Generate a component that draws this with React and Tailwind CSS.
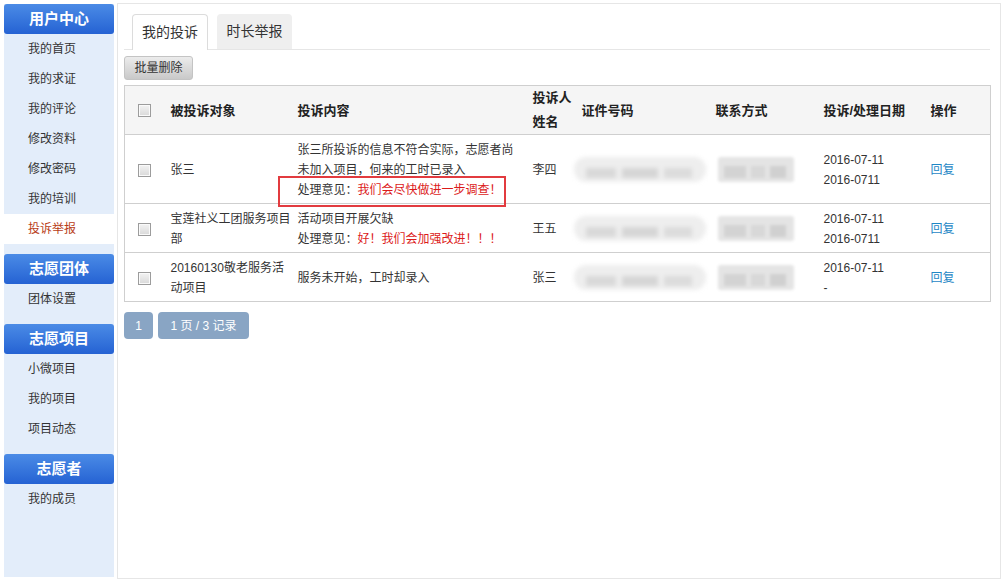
import React from 'react';

const menu = [
  { title: '用户中心', items: ['我的首页', '我的求证', '我的评论', '修改资料', '修改密码', '我的培训', '投诉举报'] },
  { title: '志愿团体', items: ['团体设置'] },
  { title: '志愿项目', items: ['小微项目', '我的项目', '项目动态'] },
  { title: '志愿者', items: ['我的成员'] },
];

const Check = () => (
  <span className="block h-[13px] w-[13px] border border-[#9c9c9c] bg-gradient-to-b from-[#f3f3f3] to-[#d9d9d9] shadow-[inset_0_0_0_1px_#fafafa]" />
);

// blurred-out personal info
const IdSmudge = () => (
  <div className="flex h-[25px] w-[132px] items-end gap-[6px] rounded-[12px] bg-[#eeeeee] px-[12px] pb-[4px] blur-[2px]">
    <span className="h-[10px] w-[30px] bg-[#d9d9d9]" />
    <span className="h-[10px] w-[36px] bg-[#d6d6d6]" />
    <span className="h-[10px] w-[28px] bg-[#dcdcdc]" />
  </div>
);

const PhoneSmudge = () => (
  <div className="flex h-[25px] w-[76px] items-end gap-[5px] rounded-[3px] bg-[#e4e4e4] px-[6px] pb-[4px] blur-[1.5px]">
    <span className="h-[12px] w-[22px] bg-[#d3d3d3]" />
    <span className="h-[12px] w-[14px] bg-[#d8d8d8]" />
    <span className="h-[12px] w-[16px] bg-[#d0d0d0]" />
  </div>
);

const rows = [
  {
    target: '张三',
    content: '张三所投诉的信息不符合实际，志愿者尚未加入项目，何来的工时已录入',
    reply: '我们会尽快做进一步调查！',
    boxed: true,
    name: '李四',
    dates: ['2016-07-11', '2016-0711'],
  },
  {
    target: '宝莲社义工团服务项目部',
    content: '活动项目开展欠缺',
    reply: '好！我们会加强改进！！！',
    name: '王五',
    dates: ['2016-07-11', '2016-0711'],
  },
  {
    target: '20160130敬老服务活动项目',
    content: '服务未开始，工时却录入',
    name: '张三',
    dates: ['2016-07-11', '-'],
  },
];

export default function App() {
  return (
    <div className="flex h-[582px] w-[1004px] gap-[3px] bg-white pl-[4px] pt-[3px] font-['Liberation_Sans','Noto_Sans_CJK_SC',sans-serif] text-[12px] text-[#333]">
      {/* Sidebar */}
      <div className="mt-[1px] flex h-[573px] w-[110px] flex-col bg-[#e3edfa]">
        {menu.map((group, gi) => (
          <div key={group.title} className={gi > 0 ? 'mt-[10px]' : ''}>
            <div className="flex h-[30px] items-center justify-center rounded-[3px] bg-gradient-to-b from-[#4b8be6] to-[#2562d3] text-[15px] font-bold text-white">
              {group.title}
            </div>
            {group.items.map(item => (
              <div
                key={item}
                className={`flex h-[30px] items-center pl-[24px] text-[12px] ${item === '投诉举报' ? 'bg-white text-[#b83c17]' : 'text-[#333]'}`}
              >
                {item}
              </div>
            ))}
          </div>
        ))}
      </div>

      {/* Main panel */}
      <div className="h-[576px] w-[884px] border border-[#e6e6e6] pl-[6px] pr-[10px] pt-[10px]">
        <div className="flex gap-[9px] border-b border-[#e6e6e6] pl-[8px]">
          <div className="-mb-px flex h-[36px] w-[76px] items-center justify-center rounded-t-[4px] border border-b-0 border-[#dcdcdc] bg-white text-[14px] text-[#333]">
            我的投诉
          </div>
          <div className="flex h-[35px] w-[75px] items-center justify-center rounded-t-[4px] bg-[#efefef] text-[14px] text-[#333]">
            时长举报
          </div>
        </div>

        <button className="mt-[6px] flex h-[24px] w-[69px] items-center justify-center rounded-[3px] border border-[#c4c4c4] bg-gradient-to-b from-[#ececec] to-[#c9c9c9] text-[12px] text-[#333]">
          批量删除
        </button>

        <table className="mt-[5px] w-[866px] table-fixed border-collapse border border-[#cfcfcf]">
          <colgroup>
            <col className="w-[42px]" />
            <col className="w-[127px]" />
            <col className="w-[235px]" />
            <col className="w-[49px]" />
            <col className="w-[134px]" />
            <col className="w-[108px]" />
            <col className="w-[107px]" />
            <col className="w-[64px]" />
          </colgroup>
          <thead>
            <tr className="bg-[#f5f5f5] text-left align-middle text-[13px] font-bold leading-[24px] text-[#222]">
              <th className="pl-[13px]"><Check /></th>
              <th className="pl-[4px] pt-[2px]">被投诉对象</th>
              <th className="pl-[4px] pt-[2px]">投诉内容</th>
              <th className="pl-[4px] pr-[4px]">投诉人姓名</th>
              <th className="pl-[4px] pt-[2px]">证件号码</th>
              <th className="pl-[4px] pt-[2px]">联系方式</th>
              <th className="pl-[4px] pt-[2px]">投诉/处理日期</th>
              <th className="pl-[4px] pt-[2px]">操作</th>
            </tr>
          </thead>
          <tbody>
            {rows.map((r, i) => (
              <tr key={i} className="border-t border-[#cfcfcf] align-middle leading-[20px]">
                <td className="pb-[3px] pl-[13px] pt-[5px]"><Check /></td>
                <td className="pb-[3px] pl-[4px] pr-[2px] pt-[5px]">{r.target}</td>
                <td className="pb-[3px] pl-[4px] pr-[8px] pt-[5px]">
                  <div>{r.content}</div>
                  {r.reply && (
                    <div>
                      <span className="relative inline-block">
                        处理意见：<span className="text-[#dc1a1a]">{r.reply}</span>
                        {r.boxed && (
                          <span className="absolute -bottom-[7px] -left-[20px] -right-[4px] -top-[4px] border-2 border-[#e23b3f]" />
                        )}
                      </span>
                    </div>
                  )}
                </td>
                <td className="pb-[3px] pl-[4px] pt-[5px]">{r.name}</td>
                <td className="py-[4px] pl-0">
                  <div className="-ml-[4px]"><IdSmudge /></div>
                </td>
                <td className="py-[4px] pl-[6px]">
                  <PhoneSmudge />
                </td>
                <td className="pb-[3px] pl-[4px] pt-[5px]">
                  {r.dates.map(d => (
                    <div key={d}>{d}</div>
                  ))}
                </td>
                <td className="pb-[3px] pl-[4px] pt-[5px]">
                  <a href="#" className="text-[#1e87c6]">回复</a>
                </td>
              </tr>
            ))}
          </tbody>
        </table>

        <div className="mt-[10px] flex gap-[5px]">
          <span className="flex h-[27px] w-[29px] items-center justify-center rounded-[4px] bg-[#89a5c4] text-[12px] text-white">1</span>
          <span className="flex h-[27px] w-[91px] items-center justify-center rounded-[4px] bg-[#89a5c4] text-[12px] text-white">1 页 / 3 记录</span>
        </div>
      </div>
    </div>
  );
}
